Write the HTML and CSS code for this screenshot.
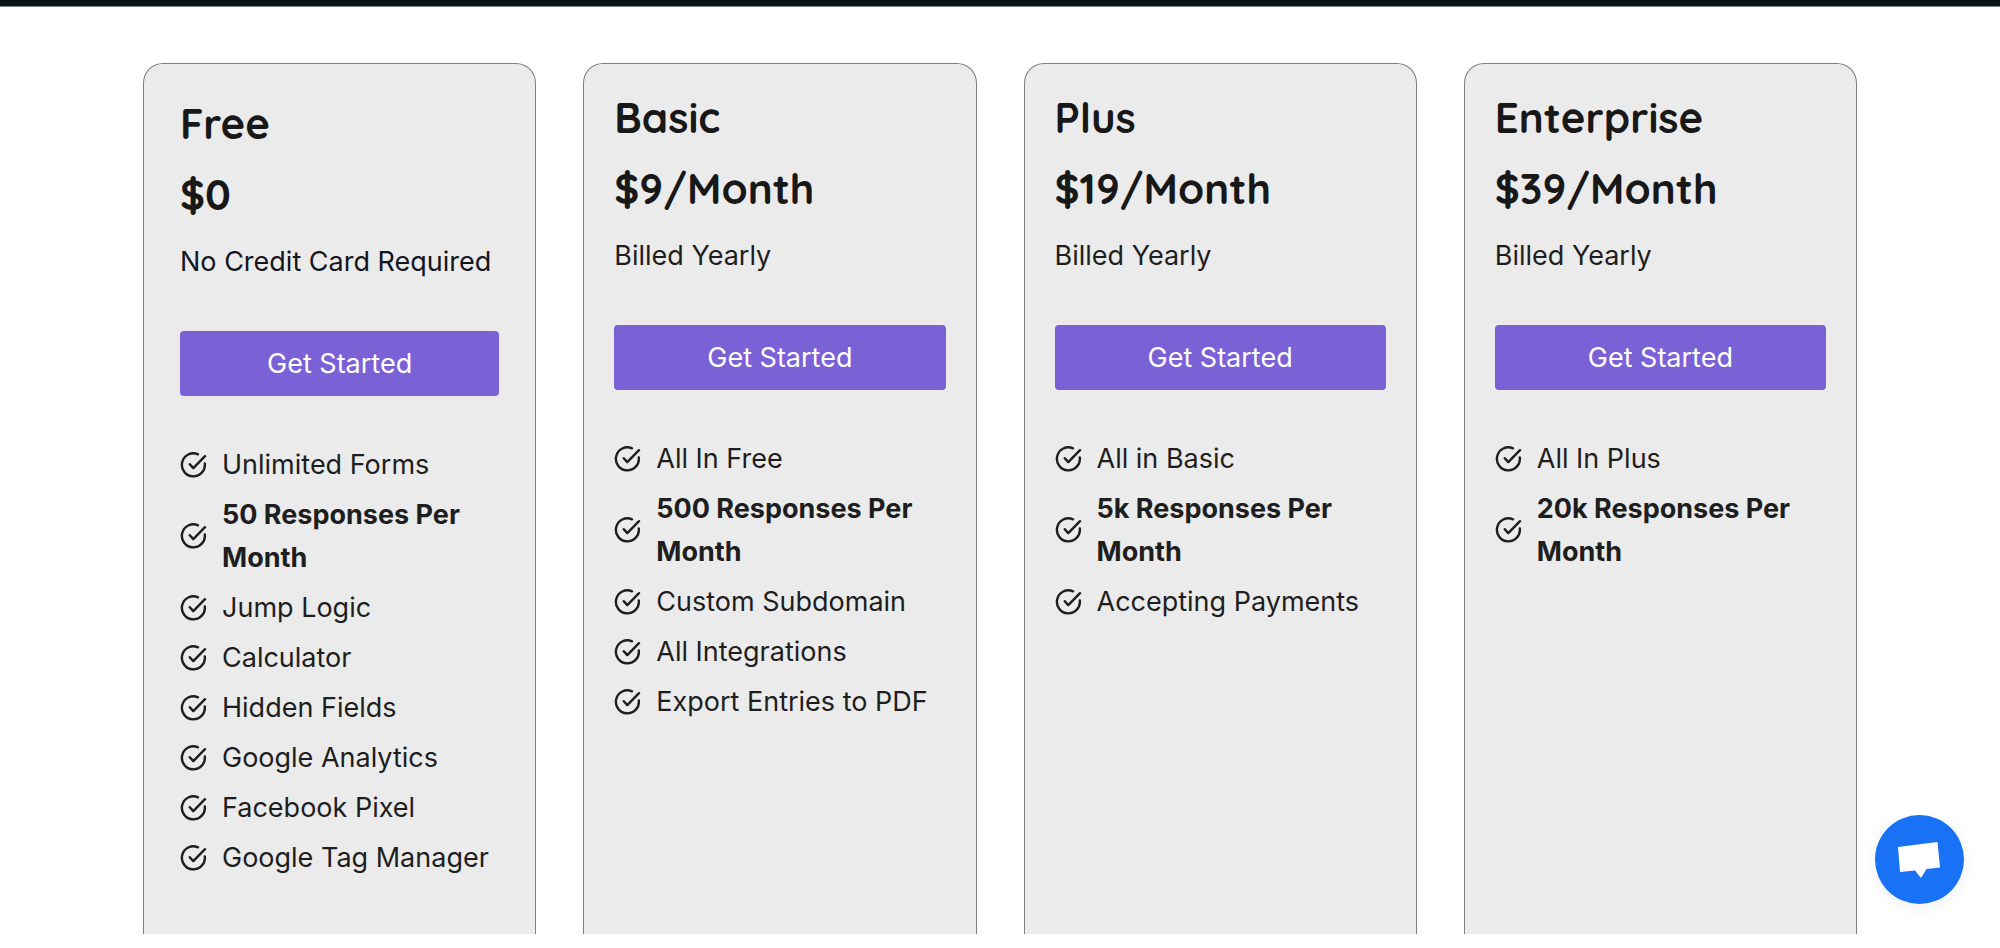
FILE: index.html
```html
<!DOCTYPE html>
<html lang="en">
<head>
<meta charset="UTF-8">
<meta name="viewport" content="width=device-width, initial-scale=1.0">
<title>Pricing</title>
<link rel="stylesheet" href="styles.css">
</head>
<body>
<svg class="icon-defs" aria-hidden="true">
    <symbol id="check" viewBox="0 0 28 28">
        <path d="M18 3.300A11.500 11.500 0 1 0 24.800 12.400M9.800 13.200l3.500 3.900L25 5.200" fill="none" stroke="currentColor" stroke-width="2.400" stroke-linecap="round" stroke-linejoin="round"/>
    </symbol>
</svg>

<header class="top-bar"></header>

<main class="plans">
    <section class="plan plan-free">
        <h2 class="plan-title">Free</h2>
        <p class="plan-price">$0</p>
        <p class="plan-note">No Credit Card Required</p>
        <button class="plan-button" type="button">Get Started</button>
        <ul class="features">
            <li><svg class="check"><use href="#check"/></svg><span>Unlimited Forms</span></li>
            <li><svg class="check"><use href="#check"/></svg><strong>50 Responses Per Month</strong></li>
            <li><svg class="check"><use href="#check"/></svg><span>Jump Logic</span></li>
            <li><svg class="check"><use href="#check"/></svg><span>Calculator</span></li>
            <li><svg class="check"><use href="#check"/></svg><span>Hidden Fields</span></li>
            <li><svg class="check"><use href="#check"/></svg><span>Google Analytics</span></li>
            <li><svg class="check"><use href="#check"/></svg><span>Facebook Pixel</span></li>
            <li><svg class="check"><use href="#check"/></svg><span>Google Tag Manager</span></li>
        </ul>
    </section>

    <section class="plan">
        <h2 class="plan-title">Basic</h2>
        <p class="plan-price">$9/Month</p>
        <p class="plan-note">Billed Yearly</p>
        <button class="plan-button" type="button">Get Started</button>
        <ul class="features">
            <li><svg class="check"><use href="#check"/></svg><span>All In Free</span></li>
            <li><svg class="check"><use href="#check"/></svg><strong>500 Responses Per Month</strong></li>
            <li><svg class="check"><use href="#check"/></svg><span>Custom Subdomain</span></li>
            <li><svg class="check"><use href="#check"/></svg><span>All Integrations</span></li>
            <li><svg class="check"><use href="#check"/></svg><span>Export Entries to PDF</span></li>
        </ul>
    </section>

    <section class="plan">
        <h2 class="plan-title">Plus</h2>
        <p class="plan-price">$19/Month</p>
        <p class="plan-note">Billed Yearly</p>
        <button class="plan-button" type="button">Get Started</button>
        <ul class="features">
            <li><svg class="check"><use href="#check"/></svg><span>All in Basic</span></li>
            <li><svg class="check"><use href="#check"/></svg><strong>5k Responses Per Month</strong></li>
            <li><svg class="check"><use href="#check"/></svg><span>Accepting Payments</span></li>
        </ul>
    </section>

    <section class="plan">
        <h2 class="plan-title">Enterprise</h2>
        <p class="plan-price">$39/Month</p>
        <p class="plan-note">Billed Yearly</p>
        <button class="plan-button" type="button">Get Started</button>
        <ul class="features">
            <li><svg class="check"><use href="#check"/></svg><span>All In Plus</span></li>
            <li><svg class="check"><use href="#check"/></svg><strong>20k Responses Per Month</strong></li>
        </ul>
    </section>
</main>

<button class="chat" type="button" aria-label="Open chat">
    <svg class="chat-icon" viewBox="0 0 44 36"><path d="M0 5L39.500 0L42 25.500L28.500 27L23 36L17 28.500L2 30Z" fill="#fff"/></svg>
</button>
</body>
</html>
```
FILE: styles.css
```css
* {
    box-sizing: border-box;
}

body {
    margin: 0;
    background-color: #fff;
    color: #1e1e1e;
    font-family: Inter, sans-serif;
    font-size: 27px;
    line-height: 43px;
}

.icon-defs {
    display: none;
}

.top-bar {
    height: 7px;
    background-color: #0b1517;
    border-bottom: 1px solid #7d8283;
}

.plans {
    display: grid;
    grid-template-columns: repeat(4, 1fr);
    gap: 47px;
    padding: 56px 143px 14px;
}

.plan {
    background-color: #ebebeb;
    border: 1px solid #808080;
    border-bottom: none;
    border-radius: 20px 20px 0 0;
    padding: 27px 30px 55px;
}

.plan-free {
    padding: 33px 36px 55px;
}

.plan-title,
.plan-price {
    margin: 0 0 18px;
    color: #181818;
    font-family: Quicksand, Lato, sans-serif;
    font-size: 42px;
    font-weight: 700;
    line-height: 53px;
}

.plan-note {
    margin: 0 0 48px;
    padding-top: 1px;
}

.plan-free .plan-note {
    color: #14161f;
}

.plan-button {
    display: block;
    width: 100%;
    height: 65px;
    margin-bottom: 47px;
    padding: 0;
    background-color: #7b61d6;
    border: none;
    border-radius: 4px;
    color: #fff;
    font: inherit;
    cursor: pointer;
}

.features {
    display: flex;
    flex-direction: column;
    gap: 7px;
    margin: 0;
    padding: 0;
    list-style: none;
}

.features li {
    display: flex;
    align-items: center;
    gap: 14px;
}

.check {
    flex: none;
    width: 28px;
    height: 28px;
}

.chat {
    position: fixed;
    right: 36px;
    bottom: 44px;
    display: flex;
    align-items: center;
    justify-content: center;
    width: 89px;
    height: 89px;
    padding: 0;
    background-color: #1972f5;
    border: none;
    border-radius: 50%;
    box-shadow: 0 4px 16px rgba(0, 0, 0, 0.06);
    cursor: pointer;
}

.chat-icon {
    width: 44px;
    height: 36px;
}
```
